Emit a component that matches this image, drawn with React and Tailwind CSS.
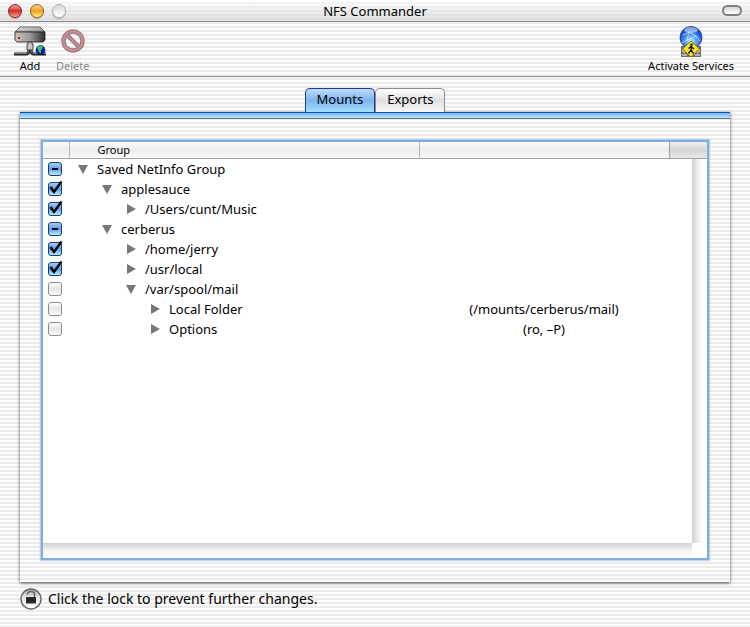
import React, { useEffect, useRef, useState } from 'react';

// Tree rows of the Mounts tab, flattened. `state` is on, mixed or off.
const ROWS = [
  { label: 'Saved NetInfo Group', level: 0, open: true, state: 'mixed' },
  { label: 'applesauce', level: 1, open: true, state: 'on' },
  { label: '/Users/cunt/Music', level: 2, open: false, state: 'on' },
  { label: 'cerberus', level: 1, open: true, state: 'mixed' },
  { label: '/home/jerry', level: 2, open: false, state: 'on' },
  { label: '/usr/local', level: 2, open: false, state: 'on' },
  { label: '/var/spool/mail', level: 2, open: true, state: 'off' },
  { label: 'Local Folder', level: 3, open: false, state: 'off', value: '(/mounts/cerberus/mail)' },
  { label: 'Options', level: 3, open: false, state: 'off', value: '(ro, –P)' },
];

const INDENT = ['pl-2', 'pl-8', 'pl-14', 'pl-20'];

function ServerIcon() {
  return (
    <svg width="32" height="32" viewBox="0 0 32 32" aria-hidden="true">
      <defs>
        <linearGradient id="serverTop" x1="0" y1="0" x2="1" y2="1">
          <stop offset="0" stopColor="#e8e8e8" />
          <stop offset="1" stopColor="#888" />
        </linearGradient>
        <linearGradient id="serverFront" x1="0" y1="0" x2="1" y2="0">
          <stop offset="0" stopColor="#c4c4c4" />
          <stop offset="0.5" stopColor="#999" />
          <stop offset="1" stopColor="#2c2c2c" />
        </linearGradient>
      </defs>
      <path d="M6 1h20l5 5H1z" fill="url(#serverTop)" stroke="#444" strokeWidth="0.8" />
      <path d="M1 6h30v8l-2 2H3l-2-2z" fill="url(#serverFront)" stroke="#222" strokeWidth="0.8" />
      <rect x="4" y="11" width="2" height="2" fill="#e01010" />
      <path d="M0 28h12c2 0 3-1 3-4M32 28H20c-2 0-3-1-3-4" fill="none" stroke="#222" strokeWidth="3" />
      <path d="M0 27.500h12c2 0 3-1 3-4M32 27.500H20c-2 0-3-1-3-4" fill="none" stroke="#999" strokeWidth="0.800" />
      <path d="M14 16h4v2h1v6h-6v-6h1z" fill="#c4c4c4" stroke="#333" strokeWidth="0.900" />
      <circle cx="26.500" cy="24" r="4.500" fill="#0a1ab0" stroke="#001050" strokeWidth="0.600" />
      <path d="M23 21.500c1-2 5-2.500 6-.5l-1 2-1 1v3l-1 .5c-1-2-2-3-3-6z" fill="#40c068" />
    </svg>
  );
}

function ForbiddenIcon() {
  return (
    <svg width="26" height="32" viewBox="0 0 26 32" aria-hidden="true">
      <circle cx="13" cy="15" r="9.500" fill="none" stroke="#a0747a" strokeWidth="4.500" />
      <circle cx="13" cy="15" r="9.500" fill="none" stroke="#bd9095" strokeWidth="2.500" />
      <path d="M7 9l12 12" stroke="#a0747a" strokeWidth="4" />
      <path d="M6 8l14 14" stroke="#bd9095" strokeWidth="2" />
    </svg>
  );
}

function ServicesIcon() {
  return (
    <svg width="26" height="32" viewBox="0 0 26 32" aria-hidden="true">
      <defs>
        <radialGradient id="globe" cx="0.5" cy="0.65" r="0.6">
          <stop offset="0" stopColor="#b8e4ff" />
          <stop offset="0.5" stopColor="#4a94f0" />
          <stop offset="1" stopColor="#0a3ab8" />
        </radialGradient>
      </defs>
      <path d="M3 20h20v11H3z" fill="#6c6c6c" />
      <path d="M4 24l3 3M4 29h5M22 24l-3 3M17 29h5" stroke="#c8c8c8" strokeWidth="1.500" />
      <circle cx="13" cy="11.500" r="11" fill="url(#globe)" stroke="#1a3a90" strokeWidth="0.800" />
      <ellipse cx="13" cy="4" rx="7" ry="3" fill="#fff" opacity="0.500" />
      <path d="M5 9l6-3 7 4 4 5M11 6l-2 8-5 3M18 10l-9 4 5 5" fill="none" stroke="#d8f0ff" strokeWidth="0.700" />
      <path d="M13 15l8.500 8-8.500 8-8.500-8z" fill="#ffe020" stroke="#8a7400" strokeWidth="0.900" />
      <circle cx="13.500" cy="18.800" r="1.200" fill="#111" />
      <path d="M13.500 20l-.5 4-2.500 3.500M13 24l2.500 3.500M10.500 22.500l2.500-2 3 2.500" fill="none" stroke="#111" strokeWidth="1.300" />
    </svg>
  );
}

function LockIcon() {
  return (
    <svg width="22" height="22" viewBox="0 0 22 22" aria-hidden="true">
      <defs>
        <linearGradient id="lockFace" x1="0" y1="0" x2="0" y2="1">
          <stop offset="0" stopColor="#aaa" />
          <stop offset="0.4" stopColor="#e4e4e4" />
          <stop offset="1" stopColor="#fff" />
        </linearGradient>
      </defs>
      <circle cx="11" cy="11" r="10" fill="url(#lockFace)" stroke="#666" strokeWidth="1.400" />
      <path d="M7.500 6.500c0-4 7-4 7 0V9" fill="none" stroke="#666" strokeWidth="1.500" />
      <path d="M6 9h10v6.500H6z" fill="#333" />
      <path d="M6 11h10M6 13h10" stroke="#111" strokeWidth="0.800" />
    </svg>
  );
}

function TrafficLight({ label, className }) {
  return (
    <button
      type="button"
      aria-label={label}
      className={`size-3.5 rounded-full border shadow-[0_1px_1px_rgba(0,0,0,0.25)] ${className}`}
    />
  );
}

function ToolbarButton({ label, disabled, children }) {
  return (
    <button
      type="button"
      disabled={disabled}
      className="flex flex-col items-center text-[11px] leading-4 text-black disabled:text-[#888]"
    >
      {children}
      {label}
    </button>
  );
}

function MountCheckbox({ label, state, onToggle }) {
  const ref = useRef(null);

  // indeterminate can only be set through the DOM
  useEffect(() => {
    ref.current.indeterminate = state === 'mixed';
  }, [state]);

  return (
    <span className="grid w-[17px] [&>*]:[grid-area:1/1]">
      <input
        ref={ref}
        type="checkbox"
        aria-label={label}
        checked={state === 'on'}
        onChange={onToggle}
        className={`m-px size-[14px] appearance-none rounded-[3px] border ${
          state === 'off'
            ? 'border-[#8c8c8c] bg-linear-to-b from-white via-[#e4e4e4] to-white'
            : 'border-[#1c3c78] bg-linear-to-b from-[#a8ccf4] via-[#5c9ee8] to-[#b4f0ff]'
        }`}
      />
      {state === 'on' && (
        <svg className="pointer-events-none" width="17" height="16" viewBox="0 0 17 16" aria-hidden="true">
          <path d="M3.500 6l3.500 5L14.500 0.500" fill="none" stroke="#000" strokeWidth="2.400" />
        </svg>
      )}
      {state === 'mixed' && (
        <svg className="pointer-events-none" width="17" height="16" viewBox="0 0 17 16" aria-hidden="true">
          <path d="M5 8h6" stroke="#000" strokeWidth="2" />
        </svg>
      )}
    </span>
  );
}

function MountRow({ row, onToggle, onExpand, track }) {
  return (
    <tr className="h-5">
      <td className="p-0 pl-1">
        <MountCheckbox label={row.label} state={row.state} onToggle={onToggle} />
      </td>
      <td className="p-0">
        <div className={`flex items-center gap-2 ${INDENT[row.level]}`}>
          <button type="button" aria-label={`Toggle ${row.label}`} onClick={onExpand}>
            <svg width="12" height="12" viewBox="0 0 12 12" fill="#777" aria-hidden="true">
              {row.open ? <path d="M1 2h10L6 11z" /> : <path d="M2 1l9 5-9 5z" />}
            </svg>
          </button>
          {row.label}
        </div>
      </td>
      <td className="p-0 text-center">{row.value}</td>
      {track}
    </tr>
  );
}

function MountsTable() {
  const [rows, setRows] = useState(ROWS);

  const update = (index, change) =>
    setRows(rows.map((row, i) => (i === index ? { ...row, ...change } : row)));

  // empty vertical scroll track, spans every body row
  const track = (
    <td
      rowSpan={rows.length + 1}
      className="bg-[linear-gradient(to_right,transparent_calc(100%_-_15px),#cfcfcf_calc(100%_-_15px),#f0f0f0_calc(100%_-_9px),#fff_calc(100%_-_4px))] p-0"
    />
  );

  return (
    <div className="border-2 border-[#7fadde] bg-white shadow-[0_0_1px_1px_rgba(127,173,222,0.5)]">
      <table className="w-full table-fixed border-collapse">
        <colgroup>
          <col className="w-[26px]" />
          <col />
          <col className="w-[250px]" />
          <col className="w-[38px]" />
        </colgroup>
        <thead>
          <tr className="h-4 border-b border-[#a0a0a0] bg-linear-to-b from-white via-[#ececec] to-[#f8f8f8] text-[11px] leading-[15px]">
            <th className="border-r border-[#b4b4b4] p-0" />
            <th className="border-r border-[#b4b4b4] p-0 pl-7 text-left font-normal">Group</th>
            <th className="border-r border-[#a0a0a0] p-0" />
            <th className="bg-linear-to-b from-[#f0f0f0] via-[#d4d4d4] to-[#e8e8e8] p-0" />
          </tr>
        </thead>
        <tbody>
          {rows.map((row, i) => (
            <MountRow
              key={row.label}
              row={row}
              onToggle={() => update(i, { state: row.state === 'on' ? 'off' : 'on' })}
              onExpand={() => update(i, { open: !row.open })}
              track={i === 0 ? track : null}
            />
          ))}
          <tr className="h-[204px]">
            <td colSpan={3} />
          </tr>
        </tbody>
      </table>
      {/* horizontal scroll track */}
      <div className="mr-[15px] h-[15px] bg-linear-to-b from-[#d0d0d0] via-[#f4f4f4] to-white" />
    </div>
  );
}

function Tab({ label, active, onClick }) {
  return (
    <button
      type="button"
      role="tab"
      aria-selected={active}
      onClick={onClick}
      className={`h-6 rounded-t-[5px] border border-b-0 px-[11px] pb-1 ${
        active
          ? 'border-[#1c3c9c] bg-linear-to-b from-[#c0dcf8] via-[#7cb4f0] to-[#a8e0ff]'
          : 'border-[#8c8c8c] bg-linear-to-b from-white via-[#e0e0e0] to-[#f8f8f8]'
      }`}
    >
      {label}
    </button>
  );
}

export default function App() {
  const [tab, setTab] = useState('Mounts');

  return (
    <div className="min-h-screen bg-[repeating-linear-gradient(to_bottom,#fcfcfc_0px,#fcfcfc_2px,#ebebeb_2px,#ebebeb_4px)] font-['Noto_Sans','Lucida_Grande',sans-serif] text-[13px] leading-5 text-black">
      <header className="grid h-[22px] grid-cols-[1fr_auto_1fr] items-center rounded-t-lg border-b border-[#8c8c8c] bg-linear-to-b from-white/60 to-[#d0d0d0]/60 px-2">
        <div className="flex gap-2">
          <TrafficLight label="Close" className="border-[#8a2020] bg-linear-to-b from-[#e8a0a0] via-[#d02828] to-[#ff9c90]" />
          <TrafficLight label="Minimize" className="border-[#9a5a10] bg-linear-to-b from-[#f8d090] via-[#f0a010] to-[#fff480]" />
          <TrafficLight label="Zoom" className="border-[#b0b0b0] bg-linear-to-b from-[#d8d8d8] to-white" />
        </div>
        <h1>NFS Commander</h1>
        <button
          type="button"
          aria-label="Toggle toolbar"
          className="h-[11px] w-5 justify-self-end rounded-full border-2 border-[#808080] bg-linear-to-b from-[#d8d8d8] to-white"
        />
      </header>

      <div className="flex justify-between border-b border-[#8c8c8c] pt-1 pr-4 pb-0.5 pl-3.5">
        <div className="flex gap-2.5">
          <ToolbarButton label="Add">
            <ServerIcon />
          </ToolbarButton>
          <ToolbarButton label="Delete" disabled>
            <ForbiddenIcon />
          </ToolbarButton>
        </div>
        <ToolbarButton label="Activate Services">
          <ServicesIcon />
        </ToolbarButton>
      </div>

      <main className="px-5 pt-[11px] pb-4">
        <div role="tablist" className="flex justify-center">
          <Tab label="Mounts" active={tab === 'Mounts'} onClick={() => setTab('Mounts')} />
          <Tab label="Exports" active={tab === 'Exports'} onClick={() => setTab('Exports')} />
        </div>
        <section className="border-t border-[#0c50b0] shadow-[0_1px_3px_rgba(0,0,0,0.7)]">
          <div className="h-1.5 border-b border-[#6c7078] bg-linear-to-b from-[#7cb0ec] to-[#b0ecff]" />
          <div className="px-[21px] pt-[21px] pb-[22px]">
            <MountsTable />
          </div>
        </section>
        <footer className="flex items-center gap-1.5 pt-1.5 text-sm">
          <button type="button" aria-label="Lock">
            <LockIcon />
          </button>
          <p>Click the lock to prevent further changes.</p>
        </footer>
      </main>
    </div>
  );
}
